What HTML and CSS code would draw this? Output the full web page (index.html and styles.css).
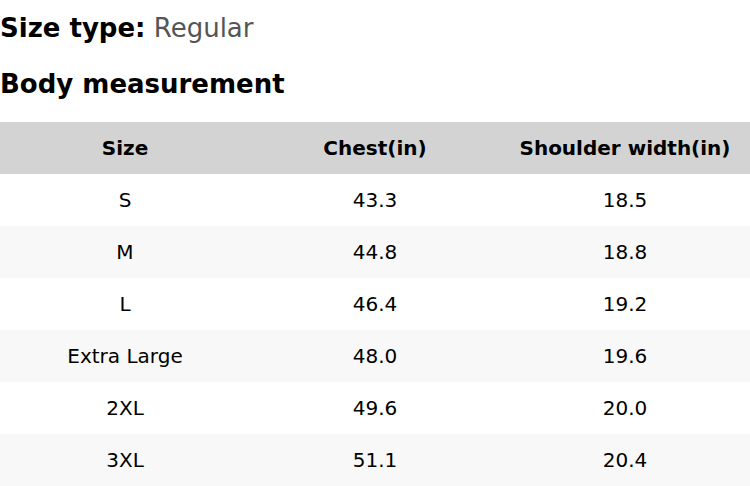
FILE: index.html
```html
<!DOCTYPE html>
<html>
<head>
<meta charset="utf-8">
<link rel="stylesheet" href="styles.css">
</head>
<body>
<div class="page">
  <p class="size-type"><span class="label">Size type:</span> <span class="value">Regular</span></p>
  <h2 class="heading">Body measurement</h2>
  <table class="chart">
    <thead>
      <tr><th>Size</th><th>Chest(in)</th><th>Shoulder width(in)</th></tr>
    </thead>
    <tbody>
      <tr><td>S</td><td>43.3</td><td>18.5</td></tr>
      <tr><td>M</td><td>44.8</td><td>18.8</td></tr>
      <tr><td>L</td><td>46.4</td><td>19.2</td></tr>
      <tr><td>Extra Large</td><td>48.0</td><td>19.6</td></tr>
      <tr><td>2XL</td><td>49.6</td><td>20.0</td></tr>
      <tr><td>3XL</td><td>51.1</td><td>20.4</td></tr>
    </tbody>
  </table>
</div>
</body>
</html>
```
FILE: styles.css
```css
html, body {
  margin: 0;
  padding: 0;
  background: #fff;
}
body {
  font-family: "DejaVu Sans", sans-serif;
  color: #000;
}
.page {
  width: 750px;
}
.size-type {
  margin: 0;
  height: 56px;
  line-height: 56px;
  font-size: 26px;
}
.size-type .label {
  font-weight: bold;
}
.size-type .value {
  color: #555;
}
.heading {
  margin: 0;
  height: 66px;
  line-height: 56px;
  font-size: 26px;
  font-weight: bold;
}
.chart {
  width: 750px;
  border-collapse: collapse;
  table-layout: fixed;
  font-size: 20px;
}
.chart th, .chart td {
  height: 52px;
  padding: 0;
  text-align: center;
  vertical-align: middle;
}
.chart th {
  background: #d3d3d3;
  font-weight: bold;
}
.chart tbody tr:nth-child(even) td {
  background: #f8f8f8;
}
```
